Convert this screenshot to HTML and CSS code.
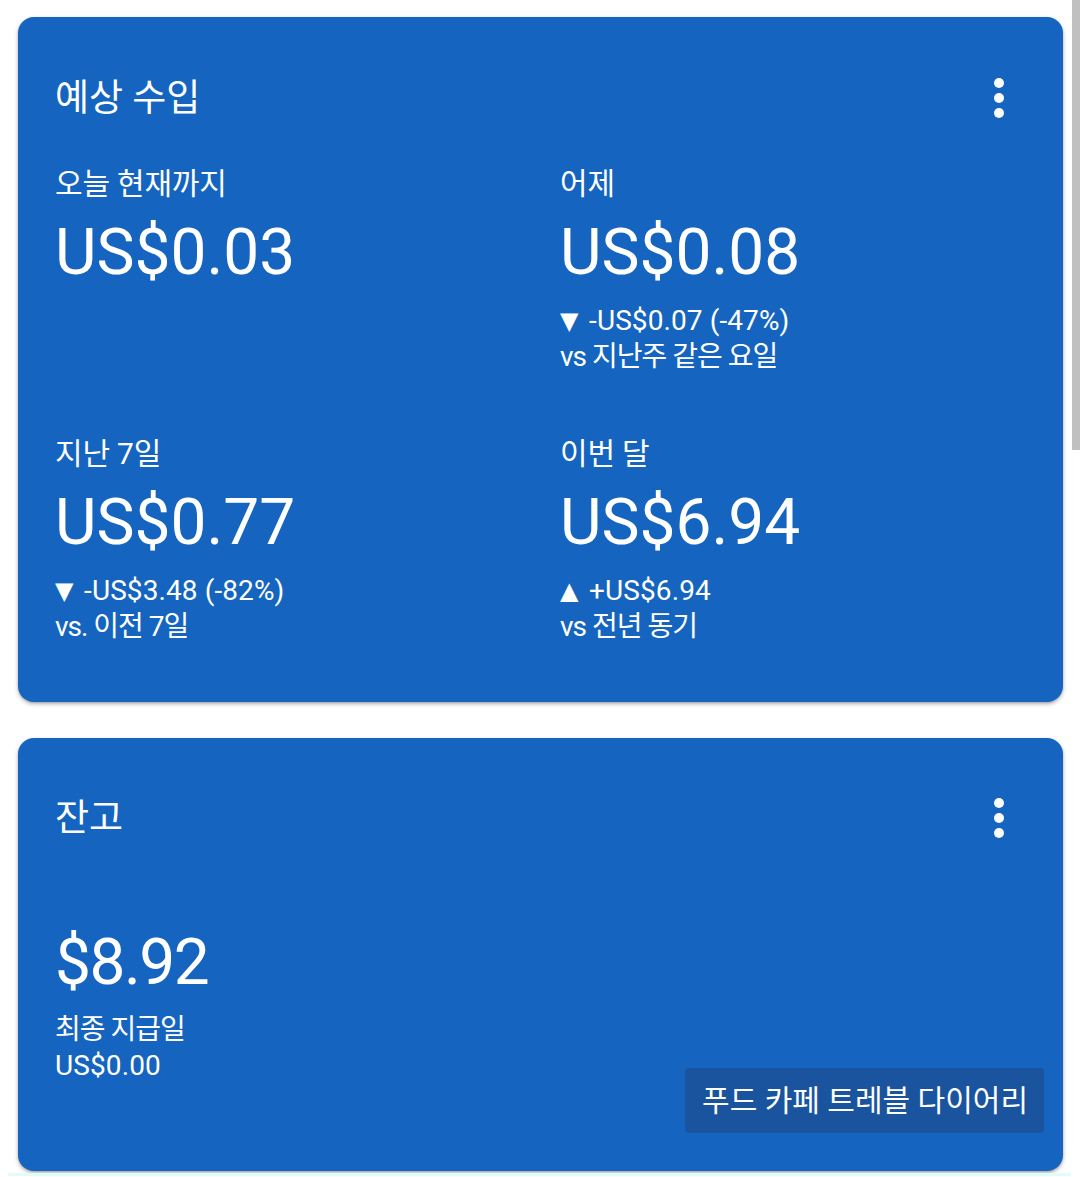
FILE: index.html
```html
<!DOCTYPE html>
<html lang="ko">
<head>
<meta charset="utf-8">
<title>수입</title>
<link rel="stylesheet" href="styles.css">
</head>
<body>
<div class="page">
  <section class="card">
    <header class="card-head">
      <h2 class="card-title">예상 수입</h2>
      <span class="more" aria-label="더보기"><i></i><i></i><i></i></span>
    </header>
    <div class="stats">
      <div class="stat">
        <div class="label">오늘 현재까지</div>
        <div class="value">US$0.03</div>
      </div>
      <div class="stat">
        <div class="label">어제</div>
        <div class="value">US$0.08</div>
        <div class="sub"><span class="tri">▼</span> -US$0.07 (-47%)</div>
        <div class="sub sub-ko">vs 지난주 같은 요일</div>
      </div>
      <div class="stat">
        <div class="label">지난 7일</div>
        <div class="value">US$0.77</div>
        <div class="sub"><span class="tri">▼</span> -US$3.48 (-82%)</div>
        <div class="sub sub-ko">vs. 이전 7일</div>
      </div>
      <div class="stat">
        <div class="label">이번 달</div>
        <div class="value">US$6.94</div>
        <div class="sub"><span class="tri">▲</span> +US$6.94</div>
        <div class="sub sub-ko">vs 전년 동기</div>
      </div>
    </div>
  </section>

  <section class="card card-balance">
    <header class="card-head">
      <h2 class="card-title">잔고</h2>
      <span class="more" aria-label="더보기"><i></i><i></i><i></i></span>
    </header>
    <div class="balance-row">
      <div class="balance">
        <div class="value value-balance">$8.92</div>
        <div class="sub sub-ko">최종 지급일</div>
        <div class="sub">US$0.00</div>
      </div>
      <div class="site-badge">푸드 카페 트레블 다이어리</div>
    </div>
  </section>
  <div class="bottom-strip"></div>
</div>
<div class="scroll-thumb"></div>
</body>
</html>
```

FILE: styles.css
```css
html, body {
  margin: 0;
  padding: 0;
  background: #ffffff;
}

body {
  font-family: Roboto, "Noto Sans CJK KR", "Noto Sans", sans-serif;
  color: #ffffff;
  width: 1080px;
  height: 1177px;
  overflow: hidden;
  position: relative;
}

.page {
  padding: 17px 17px 0 18px;
  display: flex;
  flex-direction: column;
  gap: 36px;
}

.card {
  background: #1565c0;
  border-radius: 16px;
  box-shadow: 0 2px 4px rgba(0, 0, 0, 0.28), 0 1px 2px rgba(0, 0, 0, 0.15);
  padding: 62px 37px 57px 37px;
}

.card-head {
  display: flex;
  align-items: center;
  justify-content: space-between;
  height: 40px;
}

.card-title {
  margin: 0;
  font-size: 37px;
  font-weight: 400;
  line-height: 40px;
  letter-spacing: 0;
}

.more {
  display: flex;
  flex-direction: column;
  align-items: center;
  gap: 5px;
  width: 10px;
  margin-right: 22px;
  margin-top: -2px;
}

.more i {
  display: block;
  width: 10px;
  height: 10px;
  border-radius: 50%;
  background: #ffffff;
}

.stats {
  display: grid;
  grid-template-columns: 505px 1fr;
  row-gap: 61px;
  margin-top: 47px;
}

.label {
  font-size: 30px;
  line-height: 36px;
  letter-spacing: -0.2px;
}

.value {
  font-size: 64px;
  line-height: 70px;
  margin-top: 16px;
  letter-spacing: 0;
}

.value-balance {
  letter-spacing: -1.5px;
}

.sub {
  font-size: 28px;
  line-height: 36px;
  letter-spacing: 0.1px;
}

.sub-ko {
  letter-spacing: -1px;
}

.value + .sub {
  margin-top: 15px;
}

.tri {
  font-family: "DejaVu Sans", sans-serif;
  font-size: 24px;
  display: inline-block;
  width: 22px;
  vertical-align: 1px;
}

.card-balance {
  padding: 61px 37px 38px 37px;
}

.balance-row {
  display: flex;
  justify-content: space-between;
  align-items: flex-end;
  margin-top: 73px;
}

.balance {
  padding-bottom: 49px;
}

.balance .value + .sub {
  margin-top: 14px;
}

.site-badge {
  background: #1a549e;
  border-radius: 4px;
  height: 65px;
  line-height: 65px;
  padding: 0 16px 0 17px;
  font-size: 30px;
  letter-spacing: 0;
  margin-right: -18px;
}

.bottom-strip {
  height: 3px;
  margin: -34px -8px 0 -10px;
  background: #e2fbfb;
}

.scroll-thumb {
  position: absolute;
  top: 0;
  right: 0;
  width: 8px;
  height: 450px;
  background: #c0c0c0;
}
```
